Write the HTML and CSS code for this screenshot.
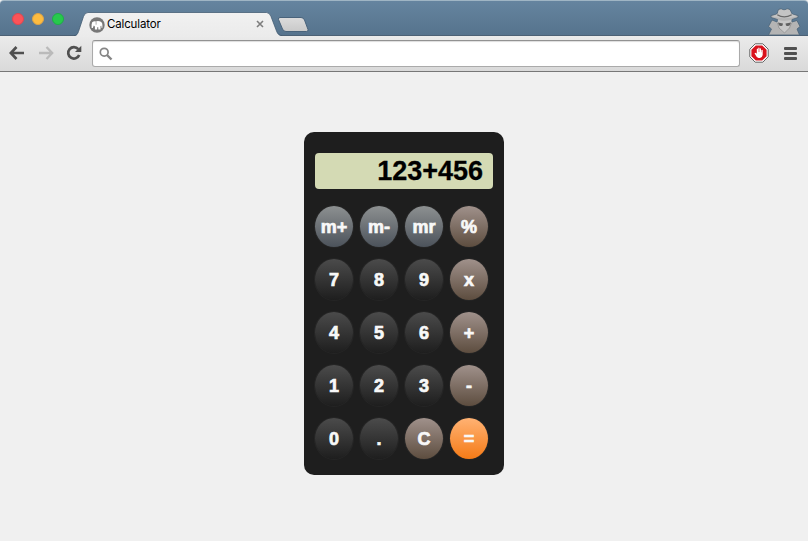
FILE: index.html
```html
<!DOCTYPE html>
<html lang="en">
<head>
<meta charset="utf-8">
<title>Calculator</title>
<link rel="stylesheet" href="styles.css">
</head>
<body>
<header class="titlebar">
  <div class="lights"><i class="light red"></i><i class="light yellow"></i><i class="light green"></i></div>
  <div class="tab">
    <svg class="tab-shape" width="208" height="25" viewBox="0 0 208 25">
      <defs><linearGradient id="tabfill" x1="0" y1="0" x2="0" y2="1"><stop offset="0" stop-color="#f1f1f1"/><stop offset="1" stop-color="#ebebeb"/></linearGradient></defs>
      <path d="M0 24C3 24 3.500 22 4.500 19.500L9.500 4.500Q11 .5 14 .5H192.500Q195.500 .5 197 4.500L202.500 19Q204 24 208 24V25H0Z" fill="url(#tabfill)"/>
      <path d="M0 23.500C3 23.500 3.500 22 4.500 19.500L9.500 4.500Q11 .5 14 .5H192.500Q195.500 .5 197 4.500L202.500 19Q204 23.500 208 23.500" fill="none" stroke="#405970" stroke-opacity=".75"/>
    </svg>
    <svg class="favicon" width="16" height="16" viewBox="0 0 16 16"><circle cx="8" cy="8" r="7.700" fill="#777"/><path d="M2.600 11V7.500Q2.600 4.800 5 4.300L7 4.600Q8.500 3.600 10.500 4.300Q13.400 4.700 13.400 8V10.700H12.400V8.700L11.500 9V12.500H9.300V10.200H8.200V12.500H5.900V9.400L4.800 8.600L3.800 11Z" fill="#fff"/><path d="M7.100 4.800V7.700" stroke="#777" stroke-width=".6" fill="none"/></svg>
    <span class="tab-title">Calculator</span>
    <svg class="close" width="8" height="8" viewBox="0 0 8 8"><path d="M1 1L7 7M7 1L1 7" stroke="#7d7d7d" stroke-width="1.600"/></svg>
  </div>
  <svg class="newtab" width="34" height="17" viewBox="0 0 34 17"><defs><linearGradient id="newfill" x1="0" y1="0" x2="0" y2="1"><stop offset="0" stop-color="#dcdcdc"/><stop offset="1" stop-color="#c9c9c9"/></linearGradient></defs><path d="M4 1.500H25Q27.500 1.500 28.500 4L32 13.500Q32.500 15.500 30.500 15.500H10Q7.500 15.500 6.500 13L2.500 3.500Q2 1.500 4 1.500Z" fill="url(#newfill)" stroke="#49637b"/></svg>
  <svg class="incognito" width="34" height="27" viewBox="0 0 34 27">
    <path d="M1.500 27L4.500 21L1.500 18.500L5 12L10 14L10.500 11.500L4 9.500V7.500L10 6L11.500 1.500L14 .8L17 2L20.500 .8L23 1.500L25 6L31 7.500V9.500L25 11.500V14L30 12.500L33 18.500L30 21L32.500 27Z" fill="#b4b4b4" stroke="#4d6479" stroke-width=".8"/>
    <path d="M10.500 6L12 2L14.500 1.500L17 2.600L20 1.500L22.500 2L24.500 6Q28 7 30 8.500Q17 12 5 8.500Z" fill="#c4c4c4"/>
    <path d="M10.300 6.800Q17 11 24.700 6.800" fill="none" stroke="#686868" stroke-width="1.300"/>
    <path d="M11 12Q17 13.500 24 12L23.500 18Q21 23 17.500 25Q13 23 11.500 18Z" fill="#c8c8c8"/>
    <path d="M11 14.500L16 15.500L15.500 17.500Q13 19 11.500 16.500ZM18.500 15.500L24 14.500L23.500 16.500Q21.500 19 19 17.500Z" fill="#626262"/>
    <path d="M10.500 15L12 20L17.500 25L22.500 20L24.500 15" fill="none" stroke="#999"/>
  </svg>
</header>
<nav class="toolbar">
  <svg class="back" width="16" height="14" viewBox="0 0 16 14"><path d="M7.500 1L1.800 7L7.500 13M2 7H15" fill="none" stroke="#505050" stroke-width="2.700"/></svg>
  <svg class="forward" width="16" height="14" viewBox="0 0 16 14"><path d="M8.500 1L14.200 7L8.500 13M14 7H1" fill="none" stroke="#bababa" stroke-width="2.300"/></svg>
  <svg class="reload" width="16" height="16" viewBox="0 0 16 16"><path d="M12.300 4.200A5.700 5.700 0 1 0 13.200 10" fill="none" stroke="#505050" stroke-width="2.700"/><path d="M15.300 .8V7H9Z" fill="#505050"/></svg>
  <div class="omnibox"><svg width="14" height="14" viewBox="0 0 14 14"><circle cx="5.200" cy="5.200" r="3.900" fill="none" stroke="#858585" stroke-width="1.700"/><path d="M8 8L12.500 12.500" stroke="#858585" stroke-width="2.400"/></svg></div>
  <svg class="blocker" width="20" height="20" viewBox="0 0 20 20"><path d="M6.200 .8H13.800L19.200 6.200V13.800L13.800 19.200H6.200L.8 13.800V6.200Z" fill="#fff" stroke="#555" stroke-width=".9"/><path d="M6.800 2.400H13.200L17.600 6.800V13.200L13.200 17.600H6.800L2.400 13.200V6.800Z" fill="#d9131d"/><path d="M5.500 10.200L7 9.800L7.800 11V6Q8.400 5.200 9 6V9H9.300V5Q9.900 4.200 10.500 5V9H10.800V5.700Q11.400 5 12 5.700V9.300H12.300V7.200Q13.200 6.500 13.700 7.200V12Q13 15 11 15H9.500Q7.500 14.400 5.500 10.200Z" fill="#fff"/></svg>
  <div class="menu"><i></i><i></i><i></i></div>
</nav>
<main>
  <section class="calculator">
    <div class="display">123+456</div>
    <div class="keys">
      <button class="memory">m+</button><button class="memory">m-</button><button class="memory">mr</button><button class="operator">%</button>
      <button>7</button><button>8</button><button>9</button><button class="operator">x</button>
      <button>4</button><button>5</button><button>6</button><button class="operator">+</button>
      <button>1</button><button>2</button><button>3</button><button class="operator">-</button>
      <button>0</button><button>.</button><button class="operator">C</button><button class="equals">=</button>
    </div>
  </section>
</main>
</body>
</html>
```
FILE: styles.css
```css
* { box-sizing: border-box; }
body { margin: 0; height: 541px; overflow: hidden; background: #f0f0f0; font-family: "Liberation Sans", Arial, sans-serif; }
svg { display: block; flex: none; }
.titlebar { height: 36px; display: flex; align-items: flex-start; background: linear-gradient(#65849f, #56738d); border-top: 1px solid #9fb5c4; border-bottom: 1px solid #4c6175; border-radius: 4px 4px 0 0; }
.lights { display: flex; gap: 8px; padding: 12px 0 0 12px; width: 74px; }
.light { width: 12px; height: 12px; border-radius: 50%; flex: none; }
.red { background: #fc5358; border: 1px solid #df4650; }
.yellow { background: #fdbc40; border: 1px solid #dda346; }
.green { background: #27c94c; border: 1px solid #1ead48; }
.tab { position: relative; width: 208px; height: 25px; margin-top: 11px; display: flex; align-items: center; flex: none; }
.tab-shape { position: absolute; left: 0; top: 0; }
.favicon, .tab-title, .close { position: relative; }
.favicon { margin-left: 15px; }
.tab-title { margin-left: 2px; font: 11.500px/14px Inter, "Liberation Sans", sans-serif; color: #000; width: 149px; letter-spacing: -.15px; padding-bottom: 1px; box-sizing: content-box; }
.close { margin-bottom: 1px; }
.newtab { margin: 15px 0 0 -6px; }
.incognito { margin: 7px 7px 0 auto; }
.toolbar { height: 36px; display: flex; align-items: center; background: linear-gradient(#ebebeb, #d9d9d9); border-bottom: 1px solid #777; }
.back, .forward, .reload, .menu { margin-bottom: 1px; }
.back { margin-left: 9px; }
.forward { margin-left: 13px; }
.reload { margin-left: 12px; }
.omnibox { width: 648px; height: 27px; margin-left: 10px; border: 1px solid #aaa; border-top-color: #929292; border-radius: 3px; background: #fff; box-shadow: inset 0 1px 1px #ddd; padding: 6px; }
.blocker { margin-left: 9px; margin-bottom: 1px; }
.menu { width: 13px; margin-left: 15px; display: grid; gap: 2px; }
.menu i { height: 3px; background: #505050; border-radius: 1px; }
main { display: flex; justify-content: center; padding-top: 60px; }
.calculator { width: 200px; height: 343px; border-radius: 10px; background: #1e1e1e; padding: 21px 11px; }
.display { height: 36px; border-radius: 4px; background: #d4dab4; padding-right: 10px; text-align: right; font-size: 27px; font-weight: bold; line-height: 36px; color: #000; -webkit-text-stroke: .3px #000; }
.keys { display: grid; grid-template-columns: repeat(4, 38px); grid-auto-rows: 41px; gap: 12px 7px; margin-top: 17px; }
button { border: 0; padding: 2px 0 0; border-radius: 50%; background: linear-gradient(#4b4b4b, #1e1e1e); box-shadow: 0 0 0 1px #262626; font: bold 18px/39px "Liberation Sans", Arial, sans-serif; color: #f8f8f8; -webkit-text-stroke: .7px #f8f8f8; white-space: nowrap; }
.memory { background: linear-gradient(#8d9091, #4c535b); }
.operator { background: linear-gradient(#a0918b, #5d4d3f); }
.equals { background: linear-gradient(#ffb273, #f57b17); }
```
